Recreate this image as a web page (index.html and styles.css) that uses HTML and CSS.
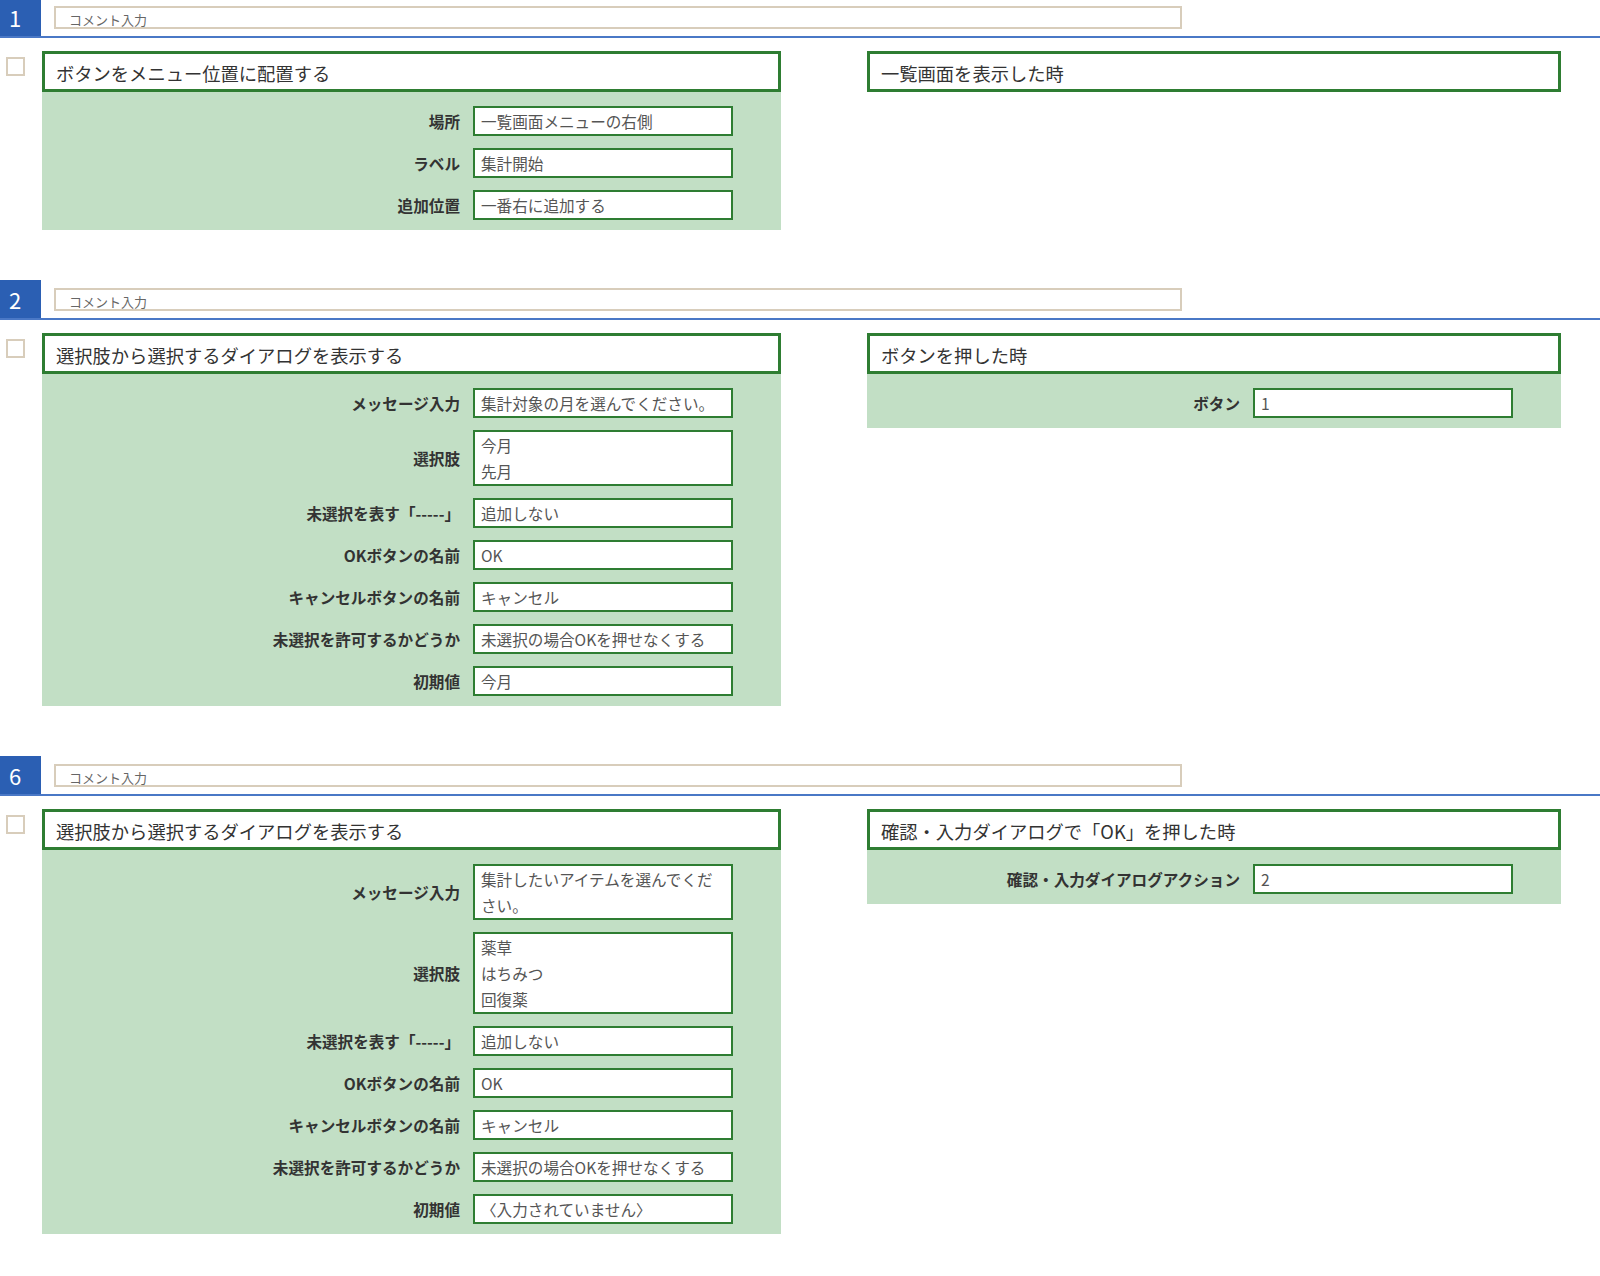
FILE: index.html
```html
<!DOCTYPE html>
<html lang="ja">
<head>
<meta charset="utf-8">
<title>Actions</title>
<link rel="stylesheet" href="styles.css">
</head>
<body>
<div class="page">

  <section class="sec">
    <div class="hdr"><div class="num">1</div><div class="comment">コメント入力</div></div>
    <div class="row">
      <div class="chk-col"><span class="chk"></span></div>
      <div class="card card-left">
        <div class="title">ボタンをメニュー位置に配置する</div>
        <div class="body">
          <div class="lbl">場所</div><div class="val">一覧画面メニューの右側</div>
          <div class="lbl">ラベル</div><div class="val">集計開始</div>
          <div class="lbl">追加位置</div><div class="val">一番右に追加する</div>
        </div>
      </div>
      <div class="card card-right">
        <div class="title">一覧画面を表示した時</div>
      </div>
    </div>
  </section>

  <section class="sec">
    <div class="hdr"><div class="num">2</div><div class="comment">コメント入力</div></div>
    <div class="row">
      <div class="chk-col"><span class="chk"></span></div>
      <div class="card card-left">
        <div class="title">選択肢から選択するダイアログを表示する</div>
        <div class="body">
          <div class="lbl">メッセージ入力</div><div class="val">集計対象の月を選んでください。</div>
          <div class="lbl">選択肢</div><div class="val">今月<br>先月</div>
          <div class="lbl">未選択を表す「-----」</div><div class="val">追加しない</div>
          <div class="lbl">OKボタンの名前</div><div class="val">OK</div>
          <div class="lbl">キャンセルボタンの名前</div><div class="val">キャンセル</div>
          <div class="lbl">未選択を許可するかどうか</div><div class="val">未選択の場合OKを押せなくする</div>
          <div class="lbl">初期値</div><div class="val">今月</div>
        </div>
      </div>
      <div class="card card-right">
        <div class="title">ボタンを押した時</div>
        <div class="body">
          <div class="lbl">ボタン</div><div class="val">1</div>
        </div>
      </div>
    </div>
  </section>

  <section class="sec">
    <div class="hdr"><div class="num">6</div><div class="comment">コメント入力</div></div>
    <div class="row">
      <div class="chk-col"><span class="chk"></span></div>
      <div class="card card-left">
        <div class="title">選択肢から選択するダイアログを表示する</div>
        <div class="body">
          <div class="lbl">メッセージ入力</div><div class="val">集計したいアイテムを選んでくだ<br>さい。</div>
          <div class="lbl">選択肢</div><div class="val">薬草<br>はちみつ<br>回復薬</div>
          <div class="lbl">未選択を表す「-----」</div><div class="val">追加しない</div>
          <div class="lbl">OKボタンの名前</div><div class="val">OK</div>
          <div class="lbl">キャンセルボタンの名前</div><div class="val">キャンセル</div>
          <div class="lbl">未選択を許可するかどうか</div><div class="val">未選択の場合OKを押せなくする</div>
          <div class="lbl">初期値</div><div class="val">〈入力されていません〉</div>
        </div>
      </div>
      <div class="card card-right">
        <div class="title">確認・入力ダイアログで「OK」を押した時</div>
        <div class="body">
          <div class="lbl">確認・入力ダイアログアクション</div><div class="val">2</div>
        </div>
      </div>
    </div>
  </section>

</div>
</body>
</html>
```

FILE: styles.css
```css
html, body {
  margin: 0;
  padding: 0;
  background: #ffffff;
}

body {
  font-family: "Noto Sans CJK JP", "Noto Sans", sans-serif;
  color: #333333;
}

.page {
  margin-top: -2px;
}

.sec {
  margin-bottom: 50px;
}

.hdr {
  display: flex;
  align-items: center;
  height: 38px;
  border-bottom: 2px solid #4a78c6;
  margin-bottom: 13px;
}

.num {
  width: 41px;
  height: 38px;
  box-sizing: border-box;
  padding-left: 9px;
  background: #2b5fb3;
  color: #ffffff;
  font-size: 22px;
  line-height: 38px;
}

.comment {
  margin-left: 13px;
  width: 1128px;
  height: 23px;
  box-sizing: border-box;
  border: 2px solid #d8cdbb;
  padding-left: 13px;
  font-size: 13px;
  line-height: 23px;
  color: #666666;
}

.row {
  display: flex;
  align-items: flex-start;
}

.chk-col {
  width: 42px;
  padding: 6px 0 0 6px;
  box-sizing: border-box;
}

.chk {
  display: block;
  width: 19px;
  height: 19px;
  box-sizing: border-box;
  border: 2px solid #d8cdbb;
  background: #ffffff;
}

.card-left {
  width: 739px;
}

.card-right {
  width: 694px;
  margin-left: 86px;
}

.title {
  height: 41px;
  box-sizing: border-box;
  border: 3px solid #2e7d32;
  background: #ffffff;
  padding-left: 11px;
  padding-top: 2px;
  font-size: 18.3px;
  line-height: 35px;
  color: #333333;
  overflow: hidden;
}

.body {
  display: grid;
  grid-template-columns: 1fr 260px;
  column-gap: 13px;
  row-gap: 12px;
  padding: 14px 48px 10px 0;
  background: #c2dfc5;
}

.lbl {
  align-self: center;
  text-align: right;
  font-size: 15.6px;
  font-weight: bold;
  color: #333333;
  white-space: nowrap;
}

.val {
  border: 2px solid #2e7d32;
  background: #ffffff;
  padding: 0 6px;
  font-size: 15.6px;
  line-height: 26px;
  color: #555555;
  white-space: nowrap;
}
```
